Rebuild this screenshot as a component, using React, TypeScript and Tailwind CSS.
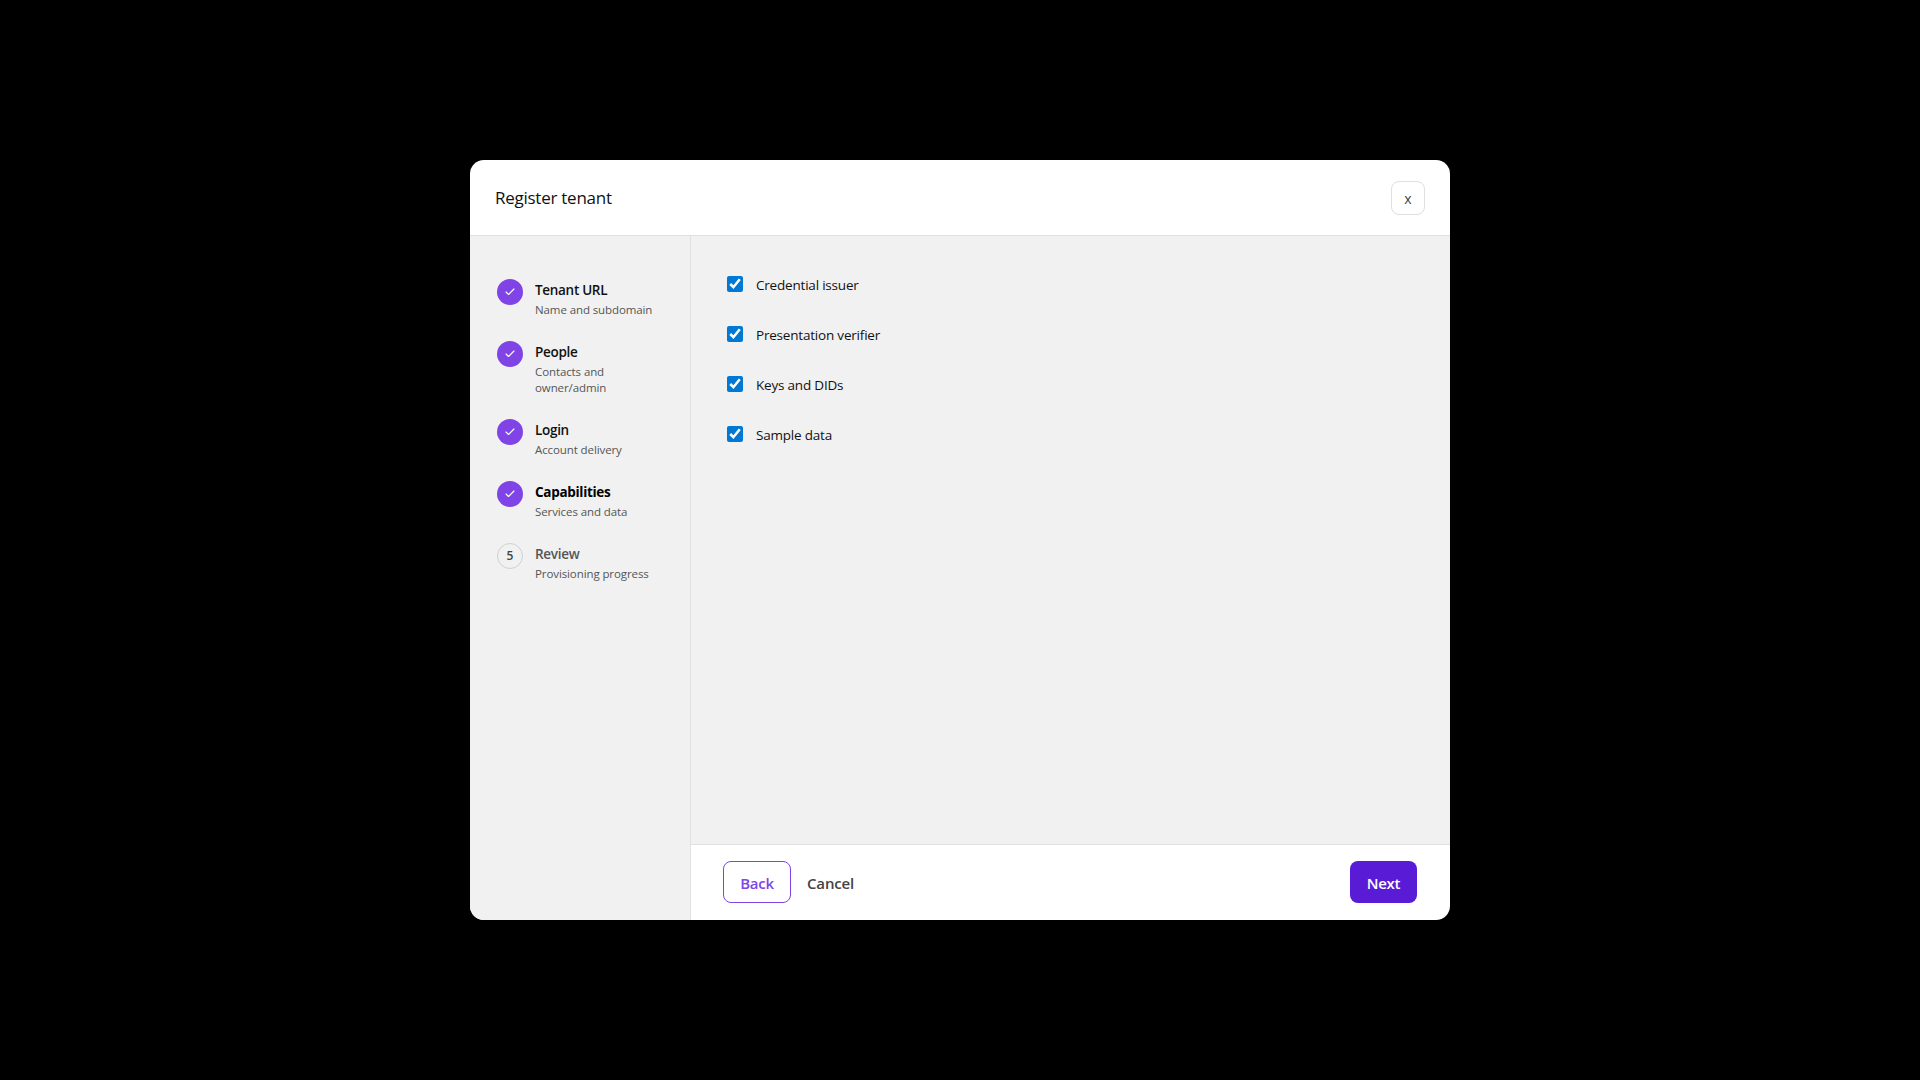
import { Check } from "lucide-react";

const steps = [
  { title: "Tenant URL", sub: "Name and subdomain", done: true },
  { title: "People", sub: "Contacts and owner/admin", done: true },
  { title: "Login", sub: "Account delivery", done: true },
  { title: "Capabilities", sub: "Services and data", done: true, current: true },
  { title: "Review", sub: "Provisioning progress", done: false },
];

const capabilities = ["Credential issuer", "Presentation verifier", "Keys and DIDs", "Sample data"];

export default function App() {
  return (
    <div className="flex h-screen items-center justify-center bg-black font-['Open_Sans',sans-serif]">
      <div className="flex h-[760px] w-[980px] flex-col overflow-hidden rounded-[14px] bg-white">
        <header className="flex h-[76px] shrink-0 items-center justify-between border-b border-[#e0e0e0] pr-[25px] pl-[25px]">
          <h2 className="pt-px text-[17px] font-medium tracking-[-0.26px] text-[#111]">Register tenant</h2>
          <button type="button" className="flex size-[34px] items-center justify-center rounded-[8px] border border-[#e0e0e0] pt-[2px] text-sm text-[#444]">
            x
          </button>
        </header>

        <div className="flex min-h-0 flex-1">
          <aside className="w-[221px] shrink-0 border-r border-[#e0e0e0] bg-[#f1f1f1] pt-[43px] pr-6 pl-[27px]">
            <ol className="flex flex-col gap-[23px]">
              {steps.map((step, i) => (
                <li key={step.title} className="flex gap-3">
                  <span
                    className={
                      step.done
                        ? "flex size-[26px] shrink-0 items-center justify-center rounded-full bg-[#8043e6] text-white"
                        : "flex size-[26px] shrink-0 items-center justify-center rounded-full border border-[#d0d0d0] text-xs font-semibold text-[#444]"
                    }
                  >
                    {step.done ? <Check size={12} strokeWidth={2.25} /> : i + 1}
                  </span>
                  <div className="min-w-0">
                    <div
                      className={
                        step.current
                          ? "text-[13.5px] leading-[22px] font-bold tracking-[-0.3px] text-black"
                          : step.done
                            ? "text-[13.5px] leading-[22px] font-semibold tracking-[-0.3px] text-[#111]"
                            : "text-[13.5px] leading-[22px] font-semibold tracking-[-0.3px] text-[#555]"
                      }
                    >
                      {step.title}
                    </div>
                    <div className="pt-px text-[11.5px] leading-4 tracking-[-0.1px] text-[#555]">{step.sub}</div>
                  </div>
                </li>
              ))}
            </ol>
          </aside>

          <div className="flex min-w-0 flex-1 flex-col">
            <main className="flex flex-1 flex-col gap-8 bg-[#f1f1f1] pt-[39px] pl-9">
              {capabilities.map((name) => (
                <label key={name} className="flex items-center gap-[13px] text-[13.5px] leading-4 tracking-[-0.2px] text-[#111]">
                  <input type="checkbox" defaultChecked className="m-0 size-4 accent-[#0078d4]" />
                  <span className="pt-[2px]">{name}</span>
                </label>
              ))}
            </main>
            <footer className="flex h-[76px] shrink-0 items-center border-t border-[#e0e0e0] pr-[33px] pb-px pl-8">
              <button type="button" className="h-[42px] w-[68px] rounded-[8px] border border-[#8043e6] pt-[2px] text-[15px] font-semibold tracking-[-0.3px] text-[#8043e6]">
                Back
              </button>
              <button type="button" className="ml-4 pt-[2px] text-[15px] font-semibold tracking-[-0.15px] text-[#444]">
                Cancel
              </button>
              <button type="button" className="ml-auto h-[42px] w-[67px] rounded-[8px] bg-[#5a1bd6] pt-[2px] text-[15px] font-semibold tracking-[-0.3px] text-white">
                Next
              </button>
            </footer>
          </div>
        </div>
      </div>
    </div>
  );
}
